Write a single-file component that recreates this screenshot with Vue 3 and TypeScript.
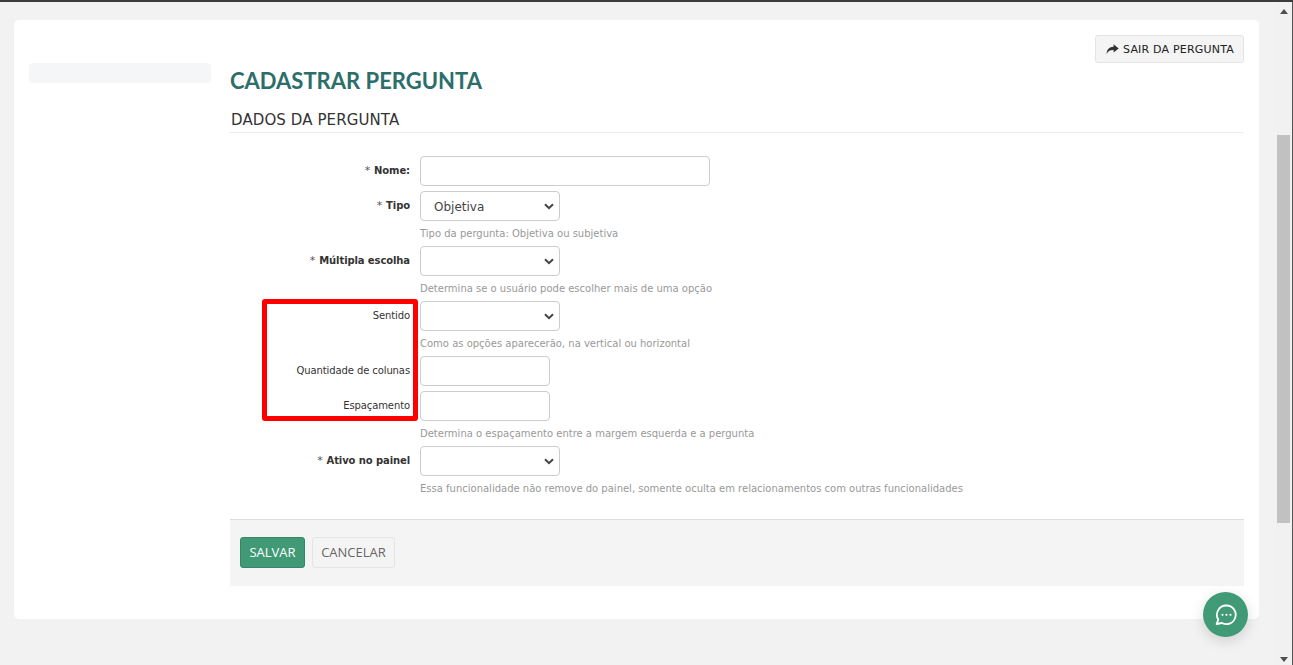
<script setup lang="ts">
interface Row {
  label: string
  required?: boolean
  bold?: boolean
  kind: 'text' | 'select' | 'short'
  value?: string
  help?: string
}
const rows: Row[] = [
  { label: 'Nome:', required: true, kind: 'text' },
  { label: 'Tipo', required: true, kind: 'select', value: 'Objetiva', help: 'Tipo da pergunta: Objetiva ou subjetiva' },
  { label: 'Múltipla escolha', required: true, kind: 'select', help: 'Determina se o usuário pode escolher mais de uma opção' },
  { label: 'Sentido', kind: 'select', help: 'Como as opções aparecerão, na vertical ou horizontal' },
  { label: 'Quantidade de colunas', kind: 'short' },
  { label: 'Espaçamento', kind: 'short', help: 'Determina o espaçamento entre a margem esquerda e a pergunta' },
  { label: 'Ativo no painel', required: true, kind: 'select', help: 'Essa funcionalidade não remove do painel, somente oculta em relacionamentos com outras funcionalidades' },
]
</script>

<template>
  <div class="window">
    <div class="topline"></div>
    <div class="viewport">
      <div class="page">
        <div class="card">
          <aside class="side"><div class="placeholder"></div></aside>
          <main class="main">
            <div class="actions">
              <button class="exit" type="button">
                <svg width="13" height="11" viewBox="0 0 13 11"><path d="M7.6 0.3 L12.7 4.4 L7.6 8.5 V6 C4.6 5.9 2.3 6.7 0.6 9.9 C0.7 5.6 3.2 2.9 7.6 2.7 Z" fill="#333"/></svg>
                <span>SAIR DA PERGUNTA</span>
              </button>
            </div>
            <h1 class="title">CADASTRAR PERGUNTA</h1>
            <h2 class="section">DADOS DA PERGUNTA</h2>
            <form class="form" @submit.prevent>
              <div v-for="row in rows" :key="row.label" class="row">
                <label class="label" :class="{ strong: row.required }">
                  <span v-if="row.required" class="star">*</span>{{ row.label }}
                </label>
                <div class="control">
                  <input v-if="row.kind !== 'select'" class="input" :class="row.kind" type="text" />
                  <div v-else class="select">
                    <span class="value">{{ row.value }}</span>
                    <svg width="10" height="7" viewBox="0 0 10 7"><path d="M1 1.2 L5 5.2 L9 1.2" fill="none" stroke="#444" stroke-width="2"/></svg>
                  </div>
                  <div v-if="row.help" class="help">{{ row.help }}</div>
                </div>
              </div>
              <div class="footer">
                <button class="save" type="button">SALVAR</button>
                <button class="cancel" type="button">CANCELAR</button>
              </div>
            </form>
          </main>
        </div>
      </div>
      <div class="scrollbar">
        <svg class="arrow" width="8" height="5" viewBox="0 0 8 5"><path d="M4 0 L8 5 H0 Z" fill="#505050"/></svg>
        <div class="thumb"></div>
        <svg class="arrow" width="8" height="5" viewBox="0 0 8 5"><path d="M0 0 H8 L4 5 Z" fill="#505050"/></svg>
      </div>
      <div class="edge"></div>
    </div>
    <div class="highlight"></div>
    <button class="chat" type="button" aria-label="Chat">
      <svg width="24" height="24" viewBox="0 0 24 24"><path d="M12.5 2.5 A9.3 9.3 0 1 1 8 20 L2.6 21 L4.3 16.6 A9.3 9.3 0 0 1 12.5 2.5 Z" fill="none" stroke="#fff" stroke-width="1.8" stroke-linejoin="round"/><circle cx="8.5" cy="11.8" r="1.1" fill="#fff"/><circle cx="12.5" cy="11.8" r="1.1" fill="#fff"/><circle cx="16.5" cy="11.8" r="1.1" fill="#fff"/></svg>
    </button>
  </div>
</template>

<style>
html, body { margin: 0; overflow: hidden; }
</style>

<style scoped>
.window { position: relative; width: 1293px; height: 665px; background: #f2f2f2; overflow: hidden; display: flex; flex-direction: column; font-family: "DejaVu Sans", sans-serif; color: #333; }
.topline { height: 2px; background: #3c3c3c; flex: none; }
.viewport { flex: 1; display: flex; min-height: 0; }
.page { flex: 1; padding: 18px 17px 0 14px; min-width: 0; }
.card { height: 599px; box-sizing: border-box; background: #fff; border-radius: 5px; display: flex; padding: 15px 15px 0; gap: 19px; }
.side { width: 182px; flex: none; padding-top: 28px; }
.placeholder { height: 20px; background: #f5f6f8; border-radius: 4px; }
.main { flex: 1; min-width: 0; }
.actions { display: flex; justify-content: flex-end; height: 28px; }
.exit { height: 28px; width: 149px; box-sizing: border-box; padding: 0 0 0 10px; background: #f4f4f4; border: 1px solid #e4e4e4; border-radius: 3px; display: flex; align-items: center; gap: 4px; font: 11px "DejaVu Sans", sans-serif; letter-spacing: 0.2px; color: #222; }
.title { margin: 4px 0 0; height: 28px; font: 700 22px/28px Lato, sans-serif; color: #2c6e6a; }
.section { margin: 13px 0 0; height: 25px; box-sizing: border-box; border-bottom: 1px solid #ececec; font: 400 15px/20px "DejaVu Sans", sans-serif; letter-spacing: 0.1px; color: #333; padding: 2px 0 0 1px; }
.form { margin-top: 23px; }
.row { display: flex; margin-bottom: 5px; }
.label { width: 180px; flex: none; box-sizing: border-box; text-align: right; font-size: 10px; line-height: 12px; padding-top: 9px; color: #333; letter-spacing: -0.1px; }
.label.strong { font-weight: 700; }
.star { font-weight: 400; font-size: 11px; color: #555; margin-right: 4px; }
.control { margin-left: 10px; }
.input { display: block; height: 30px; box-sizing: border-box; border: 1px solid #ccc; border-radius: 4px; background: #fff; padding: 0; }
.input.text { width: 290px; }
.input.short { width: 130px; }
.select { width: 140px; height: 30px; box-sizing: border-box; border: 1px solid #ccc; border-radius: 4px; background: #fff; display: flex; align-items: center; justify-content: space-between; padding: 0 5px 0 13px; font-size: 12px; color: #444; }
.value { padding-top: 2px; }
.help { height: 20px; box-sizing: border-box; padding-top: 7px; font-size: 10px; line-height: 12px; color: #999; white-space: nowrap; }
.footer { margin-top: 23px; height: 67px; box-sizing: border-box; border-top: 1px solid #ddd; background: #f4f4f4; padding: 17px 10px 0; display: flex; gap: 7px; align-items: flex-start; }
.save, .cancel { height: 31px; box-sizing: border-box; border-radius: 3px; font: 500 13px/27px "Open Sans", sans-serif; padding: 0; }
.save { width: 65px; background: #3f9a75; border: 1px solid #37856a; color: #fff; }
.cancel { width: 83px; background: #f4f4f4; border: 1px solid #e4e4e4; color: #666; font-weight: 400; }
.scrollbar { width: 15px; flex: none; display: flex; flex-direction: column; align-items: center; padding-top: 7px; padding-bottom: 3px; box-sizing: border-box; background: #f1f1f1; }
.thumb { width: 13px; height: 388px; background: #c1c1c1; margin-top: 121px; margin-bottom: auto; }
.edge { width: 2px; flex: none; background: #f1f1f1; border-right: 1px solid #555; box-sizing: border-box; }
.highlight { position: absolute; left: 262px; top: 299px; width: 156px; height: 122px; box-sizing: border-box; border: 5px solid #fe0000; border-radius: 3px; pointer-events: none; }
.chat { position: absolute; left: 1203px; top: 592px; width: 45px; height: 45px; padding: 0; border: 0; border-radius: 50%; background: #3f9a75; display: flex; align-items: center; justify-content: center; box-shadow: 0 4px 14px rgba(0, 0, 0, 0.14); }
</style>
